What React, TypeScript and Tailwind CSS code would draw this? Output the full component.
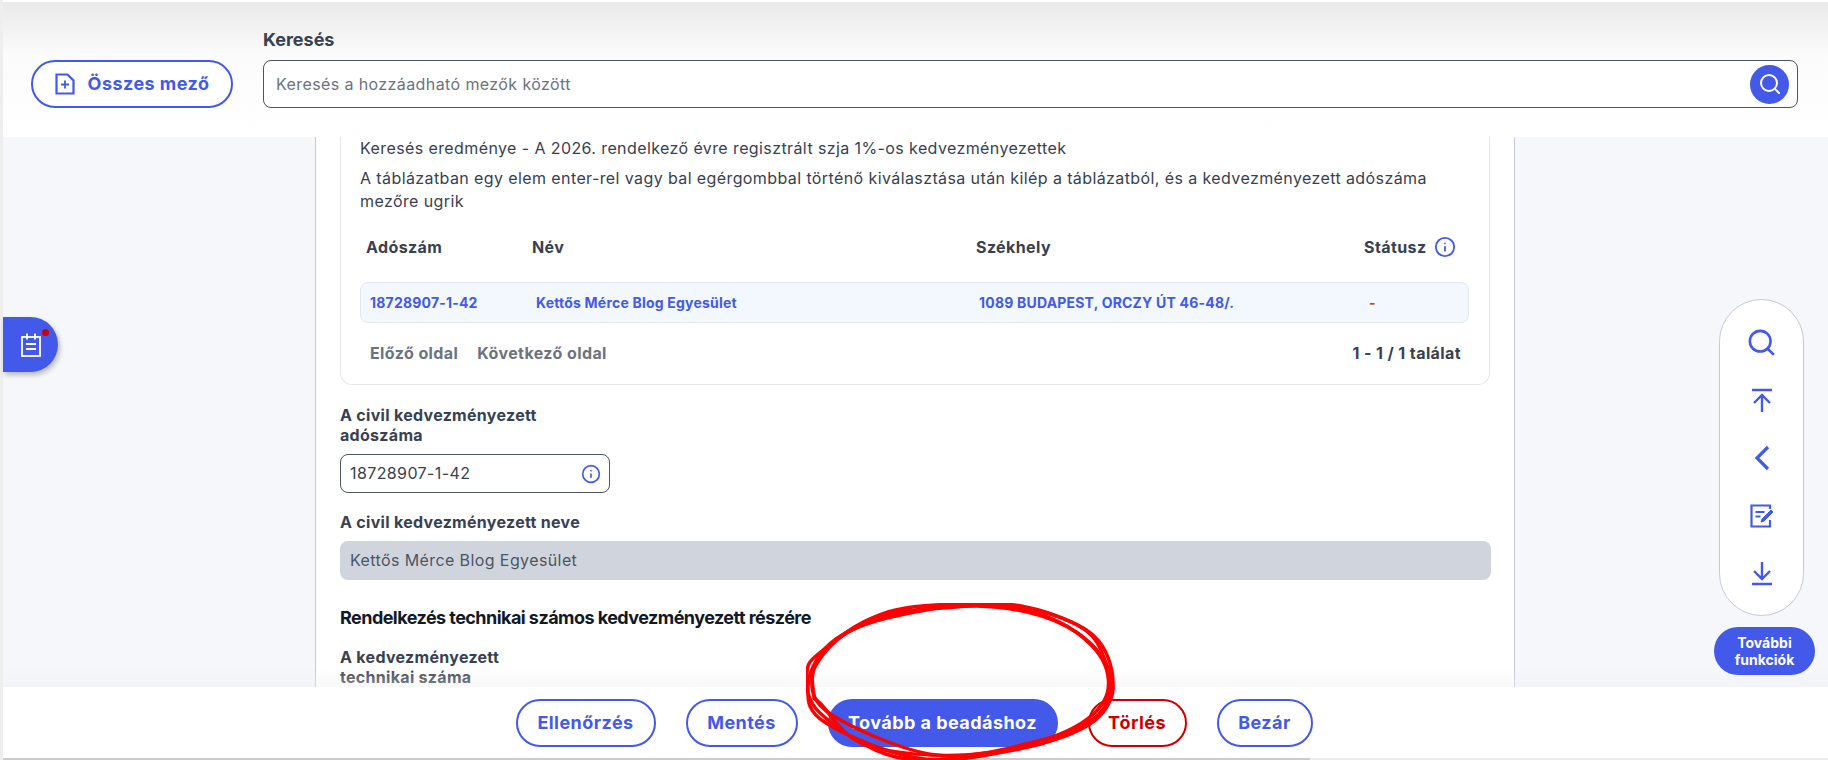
import { Search, Info } from "lucide-react"

const blue = "#4259ea"

function FileAddIcon() {
  return (
    <svg width="20" height="22" viewBox="0 0 20 22" fill="none" stroke="currentColor" strokeWidth="2.2">
      <path d="M1.5 1.5h11l6 6v13h-17z" />
      <path d="M10 7.5v8M6 11.5h8" strokeWidth="1.8" />
    </svg>
  )
}

function NotesIcon() {
  return (
    <svg width="20" height="24" viewBox="0 0 20 24" fill="none" stroke="white" strokeWidth="1.8">
      <rect x="1" y="4" width="18" height="19" />
      <path d="M6 0.5v6M14 0.5v6M5 11h10M5 16h10" />
    </svg>
  )
}

function ToTopIcon() {
  return (
    <svg width="22" height="24" viewBox="0 0 22 24" fill="none" stroke={blue} strokeWidth="2.4">
      <path d="M1 2h20M11 24V7M3 15l8-8 8 8" />
    </svg>
  )
}

function ToBottomIcon() {
  return (
    <svg width="22" height="24" viewBox="0 0 22 24" fill="none" stroke={blue} strokeWidth="2.4">
      <path d="M1 22h20M11 0v17M3 9l8 8 8-8" />
    </svg>
  )
}

function BackIcon() {
  return (
    <svg width="16" height="26" viewBox="0 0 16 26" fill="none" stroke={blue} strokeWidth="3.2">
      <path d="M14 2L3 13l11 11" />
    </svg>
  )
}

function EditNoteIcon() {
  return (
    <svg width="24" height="24" viewBox="0 0 24 24" fill="none" stroke={blue} strokeWidth="2.2">
      <path d="M20 5V1.5H1.5v21H20V16" />
      <path d="M5.5 8h9M5.5 12.5h5" />
      <path d="M11 18l1-3 9-9 2 2-9 9z" fill={blue} strokeWidth="1" />
    </svg>
  )
}

// closed smooth curve through hand-placed points (catmull-rom to bezier)
function loopPath(pts: number[][]) {
  const n = pts.length
  let d = `M${pts[0][0]} ${pts[0][1]}`
  for (let i = 0; i < n; i++) {
    const p0 = pts[(i - 1 + n) % n]
    const p1 = pts[i]
    const p2 = pts[(i + 1) % n]
    const p3 = pts[(i + 2) % n]
    const c1x = p1[0] + (p2[0] - p0[0]) / 6
    const c1y = p1[1] + (p2[1] - p0[1]) / 6
    const c2x = p2[0] - (p3[0] - p1[0]) / 6
    const c2y = p2[1] - (p3[1] - p1[1]) / 6
    d += `C${c1x} ${c1y} ${c2x} ${c2y} ${p2[0]} ${p2[1]}`
  }
  return d
}

const scribbleLoops = [
  [[2, 84], [22, 44], [82, 9], [160, 1], [226, 6], [288, 33], [307, 80], [288, 118], [224, 143], [118, 156], [20, 120]],
  [[6, 74], [30, 36], [95, 10], [170, 3], [236, 13], [282, 38], [303, 72], [292, 112], [232, 138], [130, 152], [26, 112]],
  [[1, 70], [16, 48], [70, 14], [150, 4], [215, 3], [278, 26], [300, 60], [305, 95], [270, 128], [190, 150], [90, 154], [14, 110]],
  [[8, 92], [10, 62], [48, 26], [120, 7], [190, 1], [255, 20], [296, 56], [298, 98], [252, 132], [160, 152], [60, 142], [14, 100]],
]

function RedScribble() {
  return (
    <svg width="310" height="158" viewBox="0 0 310 158" fill="none" stroke="#ff0000" strokeWidth="3.5">
      {scribbleLoops.map((pts, i) => (
        <path key={i} d={loopPath(pts)} />
      ))}
    </svg>
  )
}

export default function App() {
  return (
    <div className="relative flex h-[760px] w-[1828px] flex-col overflow-hidden bg-[#f5f7fb] font-['Inter',sans-serif] text-[#374151]">
      <header className="flex h-[137px] shrink-0 items-start gap-[30px] bg-gradient-to-b from-[#e9e9e9] via-[#fbfbfb] via-40% to-white pl-[31px] pr-[30px] pt-[60px]">
        <button className="flex h-[48px] w-[202px] shrink-0 items-center justify-center gap-[13px] rounded-full border-2 border-[#4259ea] bg-white text-lg font-bold tracking-wide text-[#4259ea]">
          <FileAddIcon />
          Összes mező
        </button>
        <div className="relative flex-1">
          <div className="absolute -top-[34px] left-0 text-lg font-bold">Keresés</div>
          <div className="flex h-[48px] items-center justify-between rounded-lg border border-[#4b5563] bg-white pl-3 pr-[8px]">
            <span className="text-base tracking-wide text-[#6b7280]">Keresés a hozzáadható mezők között</span>
            <div className="flex h-[39px] w-[39px] items-center justify-center rounded-full bg-[#4259ea]">
              <Search size={24} color="white" strokeWidth={2} />
            </div>
          </div>
        </div>
      </header>

      <main className="flex-1 overflow-hidden">
        <div className="ml-[315px] h-full w-[1200px] border-x border-[#c5c9d6] bg-white px-6">
          <section className="rounded-b-xl border border-t-0 border-[#e5e7eb] px-[19px] pb-[20px]">
            <p className="text-base leading-[23px] tracking-wide">Keresés eredménye - A 2026. rendelkező évre regisztrált szja 1%-os kedvezményezettek</p>
            <p className="mt-[7px] text-base leading-[23px] tracking-wide">
              A táblázatban egy elem enter-rel vagy bal egérgombbal történő kiválasztása után kilép a táblázatból, és a kedvezményezett adószáma mezőre ugrik
            </p>
            <div className="mt-[22px] flex h-[24px] items-center text-base font-bold tracking-wide">
              <span className="ml-[6px] w-[166px]">Adószám</span>
              <span className="w-[444px]">Név</span>
              <span className="w-[388px]">Székhely</span>
              <span className="flex items-center gap-2">
                Státusz
                <Info size={22} color={blue} strokeWidth={2} />
              </span>
            </div>
            <div className="mt-[23px] flex h-[41px] w-[1109px] items-center rounded-lg border border-[#e5e7eb] bg-[#f3f7fe] text-sm font-bold tracking-[0.2px] text-[#4259ea]">
              <span className="ml-[9px] w-[166px]">18728907-1-42</span>
              <span className="w-[443px]">Kettős Mérce Blog Egyesület</span>
              <span className="w-[390px]">1089 BUDAPEST, ORCZY ÚT 46-48/.</span>
              <span className="text-[#b45309]">-</span>
            </div>
            <div className="mt-[19px] flex h-[22px] items-center justify-between pl-[10px] pr-[9px] text-base font-bold tracking-wide">
              <div className="flex gap-[19px] text-[#6b7280]">
                <span>Előző oldal</span>
                <span>Következő oldal</span>
              </div>
              <span>1 - 1 / 1 találat</span>
            </div>
          </section>

          <div className="mt-[20px] w-[250px] text-base font-bold leading-[20px] tracking-[0.3px]">A civil kedvezményezett adószáma</div>
          <div className="mt-[9px] flex h-[39px] w-[270px] items-center justify-between rounded-lg border border-[#4b5563] pl-[9px] pr-[8px] text-base tracking-wide">
            <span className="-mt-[2px]">18728907-1-42</span>
            <Info size={20} color={blue} strokeWidth={2} />
          </div>
          <div className="mt-[19px] text-base font-bold leading-[20px] tracking-[0.3px]">A civil kedvezményezett neve</div>
          <div className="mt-[9px] flex h-[39px] w-[1151px] items-center rounded-lg bg-[#d0d5dd] pb-[2px] pl-[10px] text-base tracking-wide text-[#4b5563]">
            Kettős Mérce Blog Egyesület
          </div>
          <h3 className="mt-[26px] text-lg font-bold leading-[24px] tracking-[-0.55px] text-[#111827]">
            Rendelkezés technikai számos kedvezményezett részére
          </h3>
          <div className="mt-[17px] w-[200px] text-base font-bold leading-[20px] tracking-[0.3px]">A kedvezményezett technikai száma</div>
        </div>
      </main>

      <footer className="relative flex h-[73px] shrink-0 justify-center gap-[30px] bg-white pt-[12px] text-lg font-bold tracking-wide">
        <div className="pointer-events-none absolute -top-[20px] left-0 h-[20px] w-full bg-gradient-to-b from-transparent to-[#eeeeee]/40" />
        <button className="h-[48px] w-[140px] rounded-full border-2 border-[#4259ea] text-[#4259ea]">Ellenőrzés</button>
        <button className="h-[48px] w-[112px] rounded-full border-2 border-[#4259ea] text-[#4259ea]">Mentés</button>
        <button className="h-[48px] w-[230px] rounded-full bg-[#4259ea] text-white">Tovább a beadáshoz</button>
        <button className="h-[48px] w-[99px] rounded-full border-2 border-[#cc0000] text-[#cc0000]">Törlés</button>
        <button className="h-[48px] w-[96px] rounded-full border-2 border-[#4259ea] text-[#4259ea]">Bezár</button>
        <div className="absolute bottom-0 left-0 h-[2px] w-full bg-[#ececec]">
          <div className="h-full w-[1310px] bg-[#cccccc]" />
        </div>
      </footer>

      <div className="absolute left-0 top-0 h-[2px] w-full bg-white" />
      <div className="absolute left-0 top-0 h-full w-[3px] bg-[#eeeeee]" />

      <div className="absolute left-[3px] top-[317px] flex h-[55px] w-[55px] items-center justify-center rounded-r-[28px] bg-[#4259ea] shadow-[2px_3px_5px_rgba(0,0,0,0.25)]">
        <NotesIcon />
        <span className="absolute left-[39px] top-[12px] h-[7px] w-[7px] rounded-full bg-[#cc0000]" />
      </div>

      <div className="absolute left-[1719px] top-[299px] flex h-[317px] w-[85px] flex-col items-center rounded-full border border-[#c5c9d6] bg-white pt-[13px]">
        <div className="flex h-[58px] items-center"><Search size={31} color={blue} strokeWidth={2} /></div>
        <div className="flex h-[58px] items-center"><ToTopIcon /></div>
        <div className="flex h-[58px] items-center"><BackIcon /></div>
        <div className="flex h-[58px] items-center"><EditNoteIcon /></div>
        <div className="flex h-[58px] items-center"><ToBottomIcon /></div>
      </div>
      <button className="absolute left-[1714px] top-[627px] h-[48px] w-[101px] rounded-full bg-[#4259ea] text-sm font-bold leading-[17px] text-white">
        További funkciók
      </button>

      <div className="pointer-events-none absolute left-[806px] top-[603px]">
        <RedScribble />
      </div>
    </div>
  )
}
